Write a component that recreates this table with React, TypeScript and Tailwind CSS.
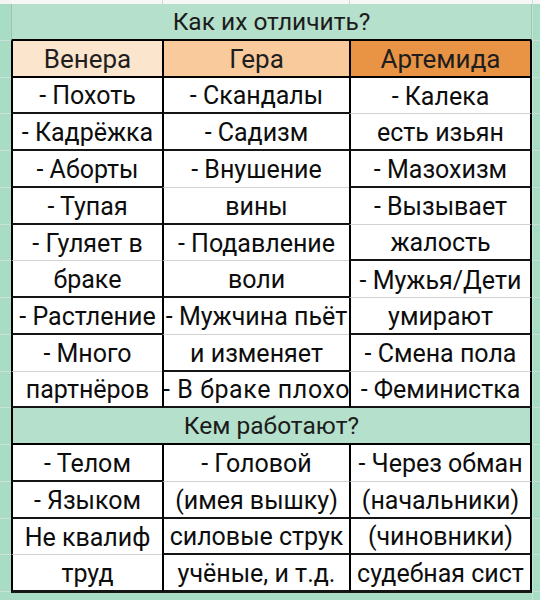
type B = 'b' | 'g'
type Cell = [string, B]

const top: Cell[][] = [
  [['- Похоть', 'b'], ['- Скандалы', 'b'], ['- Калека', 'g']],
  [['- Кадрёжка', 'b'], ['- Садизм', 'b'], ['есть изьян', 'b']],
  [['- Аборты', 'b'], ['- Внушение', 'g'], ['- Мазохизм', 'b']],
  [['- Тупая', 'b'], ['вины', 'b'], ['- Вызывает', 'g']],
  [['- Гуляет в', 'g'], ['- Подавление', 'g'], ['жалость', 'b']],
  [['браке', 'b'], ['воли', 'b'], ['- Мужья/Дети', 'g']],
  [['- Растление', 'b'], ['- Мужчина пьёт', 'g'], ['умирают', 'b']],
  [['- Много', 'g'], ['и изменяет', 'b'], ['- Смена пола', 'g']],
  [['партнёров', 'b'], ['- В браке плохо', 'b'], ['- Феминистка', 'b']],
]

const bottom: Cell[][] = [
  [['- Телом', 'b'], ['- Головой', 'g'], ['- Через обман', 'g']],
  [['- Языком', 'b'], ['(имея вышку)', 'b'], ['(начальники)', 'b']],
  [['Не квалиф', 'g'], ['силовые струк', 'b'], ['(чиновники)', 'b']],
  [['труд', 'b'], ['учёные, и т.д.', 'b'], ['судебная сист', 'b']],
]

const widths = ['w-[151px]', 'w-[187px]', 'w-[183px] border-r-2']

function DataRow({ cells }: { cells: Cell[] }) {
  return (
    <div className="flex h-[36.75px]">
      {cells.map(([text, b], i) => (
        <div
          key={i}
          className={`${widths[i]} border-l-2 border-l-black border-r-black bg-white flex items-center justify-center whitespace-nowrap pt-[2px] ${
            b === 'b' ? 'border-b-2 border-b-[#151515]' : 'border-b border-b-[#d2d2d2]'
          } ${text === '- В браке плохо' ? 'tracking-[0.6px]' : ''}`}
        >
          {text}
        </div>
      ))}
    </div>
  )
}

function TitleRow({ text, edge }: { text: string; edge: string }) {
  return (
    <div
      className={`h-[36.75px] bg-[#b5e0cb] border-b-2 border-b-black flex items-center justify-center pt-[2px] text-[24.5px] text-[#1c1c1c] ${edge}`}
    >
      {text}
    </div>
  )
}

function Strip() {
  return (
    <div className="flex flex-col">
      <div className="h-[4px] bg-[#f4f4f4]" />
      {Array.from({ length: 16 }).map((_, i) => (
        <div key={i} className="h-[36.75px] border-b border-[#c8e3d5]" />
      ))}
    </div>
  )
}

export default function App() {
  return (
    <div
      className="w-[540px] h-[600px] overflow-hidden bg-[#a9dcc4] flex text-[#0d0d0d] text-[25px] leading-none"
      style={{ fontFamily: 'Roboto, "Noto Sans", sans-serif' }}
    >
      <div className="w-[11px]">
        <Strip />
      </div>
      <div className="w-[521px] flex flex-col">
        <div className="h-[4px] bg-[#f7f7f7] flex">
          <div className="w-[151px]" />
          <div className="w-[187px] border-l border-[#d6d6d6]" />
          <div className="flex-1 border-l border-[#d6d6d6]" />
        </div>
        <TitleRow text="Как их отличить?" edge="border-x border-x-[#9fc2b1]" />
        <div className="flex h-[36.75px] border-b-2 border-b-black text-[26px] text-[#1e1e1e]">
          <div className="w-[151px] border-l-2 border-black bg-[#fce5cd] flex items-center justify-center pt-[2px]">
            Венера
          </div>
          <div className="w-[187px] border-l-2 border-black bg-[#f9cb9c] flex items-center justify-center pt-[2px]">
            Гера
          </div>
          <div className="w-[183px] border-x-2 border-black bg-[#e99445] flex items-center justify-center pt-[2px]">
            Артемида
          </div>
        </div>
        {top.map((r, i) => (
          <DataRow key={i} cells={r} />
        ))}
        <TitleRow text="Кем работают?" edge="border-x-2 border-x-black" />
        {bottom.map((r, i) => (
          <DataRow key={i} cells={r} />
        ))}
        <div className="flex-1 border-t border-[#1a1a1a]" />
      </div>
      <div className="flex-1 border-l border-[#c8e3d5]">
        <Strip />
      </div>
    </div>
  )
}
